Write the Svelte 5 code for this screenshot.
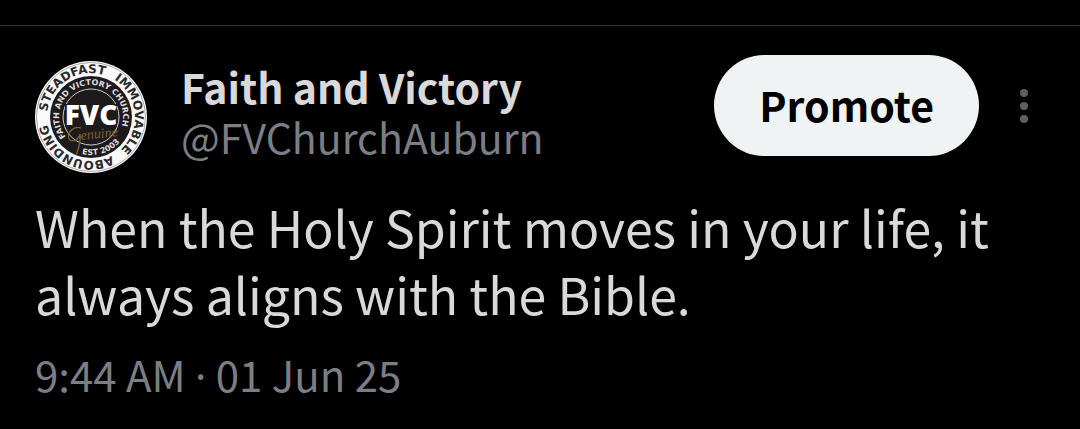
<script>
const post = {
  name: 'Faith and Victory',
  handle: '@FVChurchAuburn',
  text: 'When the Holy Spirit moves in your life, it always aligns with the Bible.',
  time: '9:44 AM',
  date: '01 Jun 25'
}
</script>

<article class="post">
  <header class="post-header">
    <svg class="avatar" viewBox="0 0 112 112" role="img" aria-label={post.name}>
      <defs>
        <path id="outer-ring" d="M12.3 50.6 A44 44 0 1 1 12.3 61.4 A44 44 0 0 1 12.3 50.6" />
        <path id="inner-ring" d="M30.8 75.7 A32 32 0 1 1 83.7 72" />
        <path id="lower-ring" d="M46.8 92.9 A38 38 0 0 0 93.3 64" />
      </defs>
      <circle cx="56" cy="56" r="56" fill="#fafafa" />
      <circle cx="56" cy="56" r="54.5" fill="none" stroke="#555" stroke-width="0.5" />
      <circle cx="56" cy="56" r="41" fill="#1d1a1b" />
      <circle cx="56" cy="56" r="28" fill="none" stroke="#ddd" stroke-width="0.9" />
      <text class="ring-text outer"><textPath href="#outer-ring">STEADFAST</textPath></text>
      <text class="ring-text outer"><textPath href="#outer-ring" startOffset="88">IMMOVABLE</textPath></text>
      <text class="ring-text outer"><textPath href="#outer-ring" startOffset="180">ABOUNDING</textPath></text>
      <text class="ring-text inner"><textPath href="#inner-ring">FAITH AND VICTORY CHURCH</textPath></text>
      <text class="ring-text inner"><textPath href="#lower-ring">EST 2003</textPath></text>
      <path d="M30 43 H82 V66 H30 Z" fill="#1d1a1b" />
      <text class="monogram" x="56" y="64">FVC</text>
      <path d="M46 67 C38 64 30 74 35 79 C40 82 45 76 45 73 C46 80 43 90 41 94" fill="none" stroke="#80602f" stroke-width="1.4" />
      <text class="script" x="46" y="79" transform="rotate(-6 46 79)">enuine</text>
    </svg>
    <div class="author">
      <a class="name" href="#profile">{post.name}</a>
      <a class="handle" href="#profile">{post.handle}</a>
    </div>
    <button class="promote">Promote</button>
    <button class="more" aria-label="More">
      <svg viewBox="0 0 10 36" width="10" height="36">
        <circle cx="5" cy="5" r="4" />
        <circle cx="5" cy="18" r="4" />
        <circle cx="5" cy="31" r="4" />
      </svg>
    </button>
  </header>
  <p class="text">{post.text}</p>
  <footer class="meta"><time>{post.time} <span class="dot">·</span> {post.date}</time></footer>
</article>

<style>
:global(body) {
  margin: 0;
  background: #000;
}

.post {
  margin-top: 25px;
  border-top: 1px solid #333;
  padding: 29px 35px 24px;
  font-family: "Noto Sans CJK JP", "Noto Sans", sans-serif;
  color: #d9d9d9;
}

.post-header {
  display: flex;
  align-items: flex-start;
}

.avatar {
  width: 112px;
  height: 112px;
  margin-top: 6px;
  flex-shrink: 0;
}

.ring-text {
  font-family: "DejaVu Sans", sans-serif;
  font-weight: 700;
}

.outer {
  font-size: 12px;
  fill: #2a2a2a;
}

.inner {
  font-size: 8px;
  fill: #ddd;
}

.monogram {
  font-family: "Open Sans", sans-serif;
  font-weight: 800;
  font-size: 28px;
  text-anchor: middle;
  fill: #fff;
}

.script {
  font-family: "Liberation Serif", serif;
  font-style: italic;
  font-size: 14px;
  fill: #80602f;
}

.author {
  display: flex;
  flex-direction: column;
  flex: 1;
  min-width: 0;
  margin: 6px 0 0 34px;
  font-size: 41px;
  line-height: 50px;
}

.author a {
  text-decoration: none;
}

.name {
  color: #d9d9d9;
  font-weight: 700;
}

.handle {
  color: #7b7f85;
}

button {
  border: 0;
  font-family: inherit;
  cursor: pointer;
}

.promote {
  padding: 0 45px 4px;
  height: 101px;
  border-radius: 51px;
  background: #eff3f4;
  color: #000;
  font-size: 41px;
  font-weight: 700;
}

.more {
  height: 101px;
  margin-left: 24px;
  padding: 0 16px;
  background: none;
}

.more svg {
  display: block;
  fill: #5f5f5f;
}

.text {
  margin: 20px 0 0;
  font-size: 50px;
  line-height: 67px;
}

.meta {
  margin-top: 17px;
  font-size: 42px;
  line-height: 60px;
  color: #7b7f85;
}

.dot {
  font-family: "Noto Sans", sans-serif;
  line-height: 1;
}
</style>
